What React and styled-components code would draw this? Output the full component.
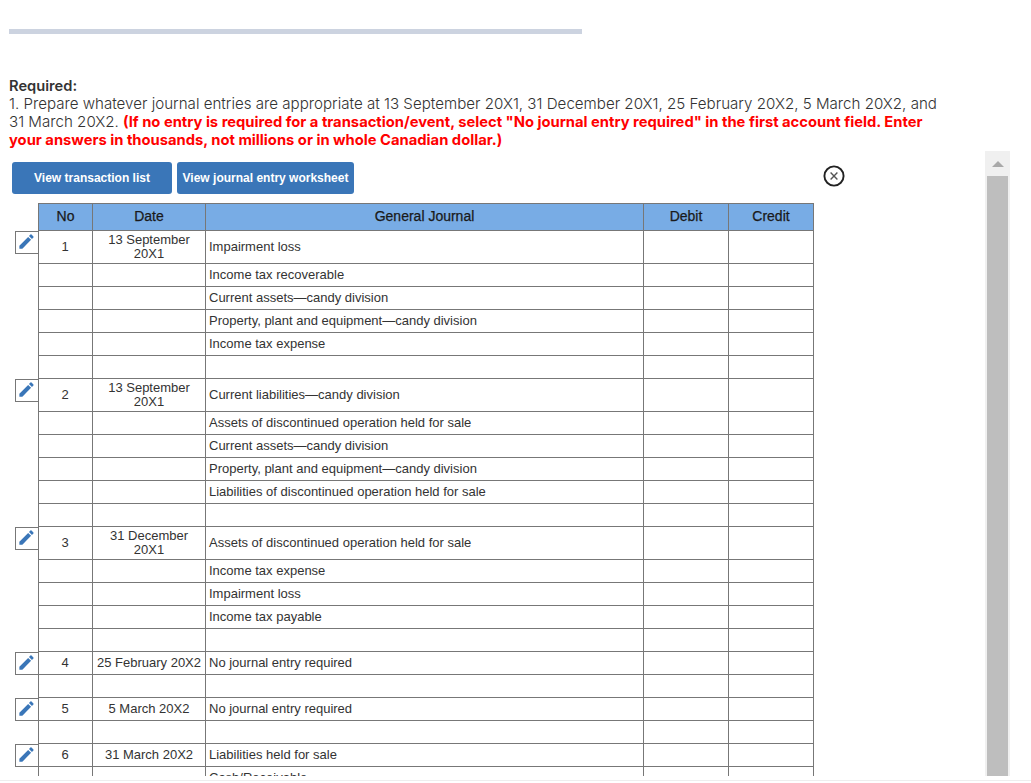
import React from "react";
import styled, { createGlobalStyle } from "styled-components";
import { MdEdit } from "react-icons/md";

const entries = [
  { no: 1, date: ["13 September", "20X1"], lines: ["Impairment loss", "Income tax recoverable", "Current assets—candy division", "Property, plant and equipment—candy division", "Income tax expense", ""] },
  { no: 2, date: ["13 September", "20X1"], lines: ["Current liabilities—candy division", "Assets of discontinued operation held for sale", "Current assets—candy division", "Property, plant and equipment—candy division", "Liabilities of discontinued operation held for sale", ""] },
  { no: 3, date: ["31 December", "20X1"], lines: ["Assets of discontinued operation held for sale", "Income tax expense", "Impairment loss", "Income tax payable", ""] },
  { no: 4, date: ["25 February 20X2"], lines: ["No journal entry required", ""] },
  { no: 5, date: ["5 March 20X2"], lines: ["No journal entry required", ""] },
  { no: 6, date: ["31 March 20X2"], lines: ["Liabilities held for sale", "Cash/Receivable"] },
];

function App() {
  return (
    <>
      <GlobalStyle />
      <Page>
        <ProgressBar />
        <Question>
          <Heading>Required:</Heading>
          1. Prepare whatever journal entries are appropriate at 13 September 20X1, 31 December 20X1, 25 February 20X2, 5 March 20X2, and 31 March 20X2.{" "}
          <Warning>(If no entry is required for a transaction/event, select "No journal entry required" in the first account field. Enter your answers in thousands, not millions or in whole Canadian dollar.)</Warning>
        </Question>
        <Panel>
          <PanelBody>
            <Toolbar>
              <ActionButton $wide>View transaction list</ActionButton>
              <ActionButton>View journal entry worksheet</ActionButton>
              <CloseButton aria-label="Close">
                <svg width="22" height="22" viewBox="0 0 22 22" fill="none">
                  <circle cx="11" cy="11" r="9.6" stroke="#222" strokeWidth="1.9" />
                  <path d="M7.6 7.6l6.8 6.8M14.4 7.6l-6.8 6.8" stroke="#555" strokeWidth="1.4" />
                </svg>
              </CloseButton>
            </Toolbar>
            <Journal>
              <colgroup>
                <col width="23" />
                <col width="54" />
                <col width="113" />
                <col width="438" />
                <col width="85" />
                <col width="85" />
              </colgroup>
              <thead>
                <tr>
                  <EditCell />
                  <HeadCell>No</HeadCell>
                  <HeadCell>Date</HeadCell>
                  <HeadCell>General Journal</HeadCell>
                  <HeadCell>Debit</HeadCell>
                  <HeadCell>Credit</HeadCell>
                </tr>
              </thead>
              <tbody>
                {entries.map((entry) =>
                  entry.lines.map((line, i) => (
                    <Row key={entry.no + "-" + i} $tall={i === 0 && entry.date.length > 1}>
                      <EditCell>
                        {i === 0 && (
                          <EditButton aria-label="Edit">
                            <MdEdit size={19} color="#3a76b8" />
                          </EditButton>
                        )}
                      </EditCell>
                      <NumberCell>{i === 0 ? entry.no : ""}</NumberCell>
                      <DateCell>
                        {i === 0 && entry.date.map((part) => <div key={part}>{part}</div>)}
                      </DateCell>
                      <AccountCell>{line}</AccountCell>
                      <Cell />
                      <Cell />
                    </Row>
                  ))
                )}
              </tbody>
            </Journal>
          </PanelBody>
          <Scrollbar>
            <ScrollArrow />
            <ScrollThumb />
          </Scrollbar>
        </Panel>
      </Page>
    </>
  );
}

const GlobalStyle = createGlobalStyle`
  html, body {
    margin: 0;
    height: 100%;
    overflow: hidden;
    background: #fff;
  }
`;

const Page = styled.div`
  box-sizing: border-box;
  width: 1031px;
  height: 781px;
  padding: 29px 0 4px 9px;
  display: flex;
  flex-direction: column;
  border-bottom: 1px solid #eee;
  font-family: "Inter", "Liberation Sans", sans-serif;
`;

const ProgressBar = styled.div`
  width: 573px;
  height: 5px;
  background: #ccd3e0;
`;

const Question = styled.div`
  margin-top: 43px;
  width: 935px;
  font-size: 15.13px;
  font-weight: 300;
  line-height: 18px;
  color: #333;
`;

const Heading = styled.div`
  font-size: 14.7px;
  font-weight: 600;
  color: #333;
`;

const Warning = styled.strong`
  color: #f00;
  font-weight: 700;
  font-size: 14.75px;
`;

const Panel = styled.div`
  flex: 1;
  min-height: 0;
  margin-top: 2px;
  display: flex;
  align-items: stretch;
`;

const PanelBody = styled.div`
  width: 976px;
  overflow: hidden;
  padding-top: 11px;
  box-sizing: border-box;
`;

const Toolbar = styled.div`
  display: flex;
  align-items: center;
  gap: 5px;
  padding-left: 3px;
  height: 32px;
  margin-bottom: 9px;
`;

const ActionButton = styled.button`
  width: ${(p) => (p.$wide ? "160px" : "177px")};
  height: 32px;
  padding: 0;
  border: none;
  border-radius: 3px;
  background: #3a76b8;
  color: #fff;
  font: 700 12px "Liberation Sans", Arial, sans-serif;
`;

const CloseButton = styled.button`
  margin: -5px 0 0 464px;
  padding: 0;
  border: none;
  background: none;
  display: flex;
`;

const Journal = styled.table`
  margin-left: 6px;
  width: 798px;
  table-layout: fixed;
  border-collapse: collapse;
  font: 13px "Liberation Sans", Arial, sans-serif;
  color: #333;
`;

const Cell = styled.td`
  border: 1px solid #777;
  padding: 0;
`;

const HeadCell = styled.th`
  height: 24px;
  padding: 0 0 2px 1px;
  border: 1px solid #777;
  background: #78ace5;
  color: #1a1a1a;
  font-size: 14px;
  font-weight: 400;
  -webkit-text-stroke: 0.25px #1a1a1a;
`;

const NumberCell = styled(Cell)`
  padding-bottom: 2px;
  text-align: center;
`;

const DateCell = styled(Cell)`
  padding-left: 1px;
  text-align: center;
  line-height: 14px;
  white-space: nowrap;
`;

const AccountCell = styled(Cell)`
  padding: 0 0 2px 3.5px;
  white-space: nowrap;
`;

const EditCell = styled.td`
  padding: 0;
  vertical-align: top;
`;

const Row = styled.tr`
  height: ${(p) => (p.$tall ? "33px" : "23px")};
`;

const EditButton = styled.button`
  box-sizing: border-box;
  width: 24px;
  height: 23px;
  padding: 0 2px 2px 0;
  display: flex;
  align-items: center;
  justify-content: center;
  background: #fff;
  border: 1px solid #777;
  border-right: none;
`;

const Scrollbar = styled.div`
  width: 25px;
  background: #f0f0f0;
  display: flex;
  flex-direction: column;
  align-items: center;
`;

const ScrollArrow = styled.div`
  flex: none;
  width: 0;
  height: 0;
  margin: 10px 0 9px;
  border-left: 6px solid transparent;
  border-right: 6px solid transparent;
  border-bottom: 6px solid #a9a9a9;
`;

const ScrollThumb = styled.div`
  flex: 1;
  width: 21px;
  background: #bebebe;
`;

export default App;
